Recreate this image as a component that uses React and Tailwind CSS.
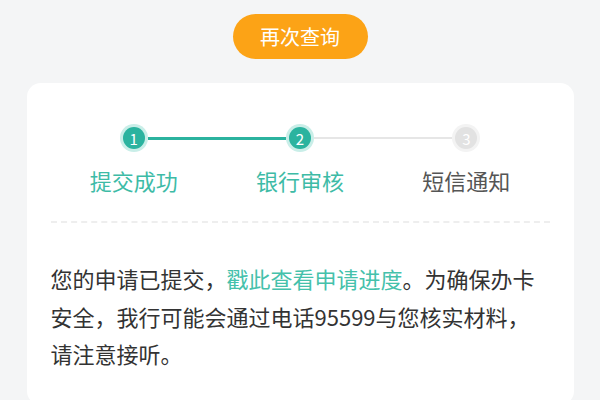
export default function App() {
  const steps = [
    { n: 1, label: "提交成功", state: "done", left: "none", right: "teal" },
    { n: 2, label: "银行审核", state: "done", left: "teal", right: "gray" },
    { n: 3, label: "短信通知", state: "todo", left: "gray", right: "none" },
  ];

  const lineClass = (kind) =>
    kind === "teal"
      ? "h-[3px] flex-1 bg-[#2bb39f]"
      : kind === "gray"
      ? "h-[2px] flex-1 bg-[#e6e6e6]"
      : "h-[2px] flex-1 bg-transparent";

  return (
    <div
      className="flex h-[400px] w-[600px] flex-col items-center overflow-hidden bg-[#f4f5f6]"
      style={{ fontFamily: '"Noto Sans CJK SC", "Noto Sans", sans-serif' }}
    >
      {/* Button */}
      <button
        type="button"
        className="mt-[14px] flex h-[45px] w-[135px] flex-none items-center justify-center rounded-full bg-[#fca316] text-[20px] text-white"
      >
        再次查询
      </button>

      {/* Card */}
      <div className="mt-[24px] w-[547px] flex-none rounded-[14px] bg-white px-6 pb-8 pt-[41px]">
        <div className="grid grid-cols-3">
          {steps.map((s) => (
            <div key={s.n} className="flex flex-col items-center">
              <div className="flex w-full items-center">
                <div className={lineClass(s.left)} />
                <div
                  className={`flex h-[28px] w-[28px] items-center justify-center rounded-full ${
                    s.state === "done" ? "bg-[#c9eee8]" : "bg-[#f3f3f3]"
                  }`}
                >
                  <div
                    className={`flex h-[22px] w-[22px] items-center justify-center rounded-full text-[15px] leading-none text-white ${
                      s.state === "done" ? "bg-[#2bb39f]" : "bg-[#e2e2e2]"
                    }`}
                  >
                    {s.n}
                  </div>
                </div>
                <div className={lineClass(s.right)} />
              </div>
              <span
                className={`mt-[13px] text-[22px] leading-[30px] ${
                  s.state === "done" ? "text-[#3dbba6]" : "text-[#555555]"
                }`}
              >
                {s.label}
              </span>
            </div>
          ))}
        </div>

        <div className="mt-[26px] border-t-2 border-dashed border-[#eeeeee]" />

        <p className="mt-[37px] w-[496px] text-[22px] leading-[37.5px] text-[#333333]">
          您的申请已提交，
          <span className="text-[#45c1ab]">戳此查看申请进度</span>
          。为确保办卡安全，我行可能会通过电话95599与您核实材料，请注意接听。
        </p>
      </div>
    </div>
  );
}
